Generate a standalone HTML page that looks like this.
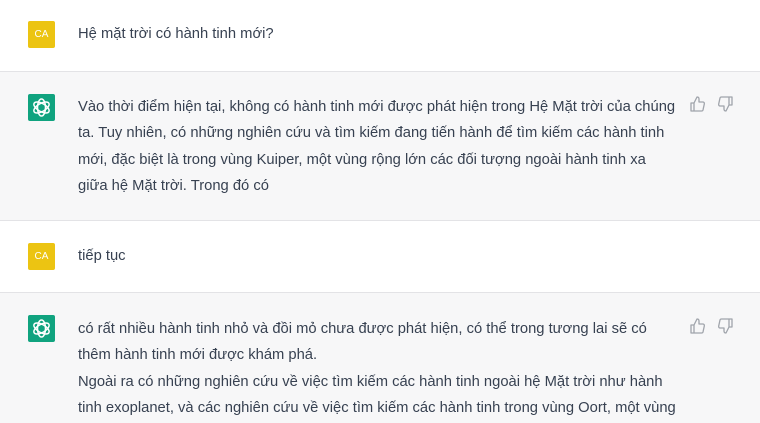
<!DOCTYPE html>
<html><head><meta charset="utf-8"><style>
body{margin:0;width:760px;height:422px;overflow:hidden;background:#fff;font-family:"Liberation Sans",sans-serif;color:#374151;position:relative}
.sec{position:absolute;left:0;width:760px}
.gray{background:#f7f7f8}
.bt{border-top:1px solid #e3e3e6}
.av{position:absolute;left:28px;width:27px;height:27px;border-radius:2px}
.ca{background:#ecc412;color:#fff;font-size:10px;line-height:27px;text-align:center}
.gpt{background:#10a37f}
.t{position:absolute;left:78px;font-size:14.75px;line-height:26.3px;white-space:nowrap}
</style></head><body>
<div class="sec" style="top:0;height:71px"></div>
<div class="av ca" style="top:21px">CA</div>
<div class="t" style="top:21px">Hệ mặt trời có hành tinh mới?</div>

<div class="sec gray bt" style="top:71px;height:149px"></div>
<div class="av gpt" style="top:94px"><svg width="27" height="27" viewBox="0 0 27 27" fill="none" stroke="#fff" stroke-width="1.5"><g transform="translate(13.5 13.5)"><ellipse rx="4" ry="8.5"/><ellipse rx="4" ry="8.5" transform="rotate(60)"/><ellipse rx="4" ry="8.5" transform="rotate(120)"/></g></svg></div>
<div class="t" style="top:94px">Vào thời điểm hiện tại, không có hành tinh mới được phát hiện trong Hệ Mặt trời của chúng<br>ta. Tuy nhiên, có những nghiên cứu và tìm kiếm đang tiến hành để tìm kiếm các hành tinh<br>mới, đặc biệt là trong vùng Kuiper, một vùng rộng lớn các đối tượng ngoài hành tinh xa<br>giữa hệ Mặt trời. Trong đó có</div>
<svg style="position:absolute;left:690px;top:96px" width="44" height="16" viewBox="0 0 44 16" fill="none" stroke="#a0a4ab" stroke-width="1.3" stroke-linejoin="round"><path d="M1 7h3v8H1zM4 7l3-6c1.5 0 2 1 2 2v3h4c1 0 1.5 1 1.3 2l-1.3 6c-.2.8-.8 1-1.5 1H4"/><path d="M42 9h-3V1h3zM39 9l-3 6c-1.5 0-2-1-2-2v-3h-4c-1 0-1.5-1-1.3-2l1.3-6c.2-.8.8-1 1.5-1H39"/></svg>

<div class="sec bt" style="top:220px;height:72px"></div>
<div class="av ca" style="top:243px">CA</div>
<div class="t" style="top:243px">tiếp tục</div>

<div class="sec gray bt" style="top:292px;height:130px"></div>
<div class="av gpt" style="top:315px"><svg width="27" height="27" viewBox="0 0 27 27" fill="none" stroke="#fff" stroke-width="1.5"><g transform="translate(13.5 13.5)"><ellipse rx="4" ry="8.5"/><ellipse rx="4" ry="8.5" transform="rotate(60)"/><ellipse rx="4" ry="8.5" transform="rotate(120)"/></g></svg></div>
<div class="t" style="top:316px">có rất nhiều hành tinh nhỏ và đồi mỏ chưa được phát hiện, có thể trong tương lai sẽ có<br>thêm hành tinh mới được khám phá.<br>Ngoài ra có những nghiên cứu về việc tìm kiếm các hành tinh ngoài hệ Mặt trời như hành<br>tinh exoplanet, và các nghiên cứu về việc tìm kiếm các hành tinh trong vùng Oort, một vùng</div>
<svg style="position:absolute;left:690px;top:318px" width="44" height="16" viewBox="0 0 44 16" fill="none" stroke="#a0a4ab" stroke-width="1.3" stroke-linejoin="round"><path d="M1 7h3v8H1zM4 7l3-6c1.5 0 2 1 2 2v3h4c1 0 1.5 1 1.3 2l-1.3 6c-.2.8-.8 1-1.5 1H4"/><path d="M42 9h-3V1h3zM39 9l-3 6c-1.5 0-2-1-2-2v-3h-4c-1 0-1.5-1-1.3-2l1.3-6c.2-.8.8-1 1.5-1H39"/></svg>
</body></html>
